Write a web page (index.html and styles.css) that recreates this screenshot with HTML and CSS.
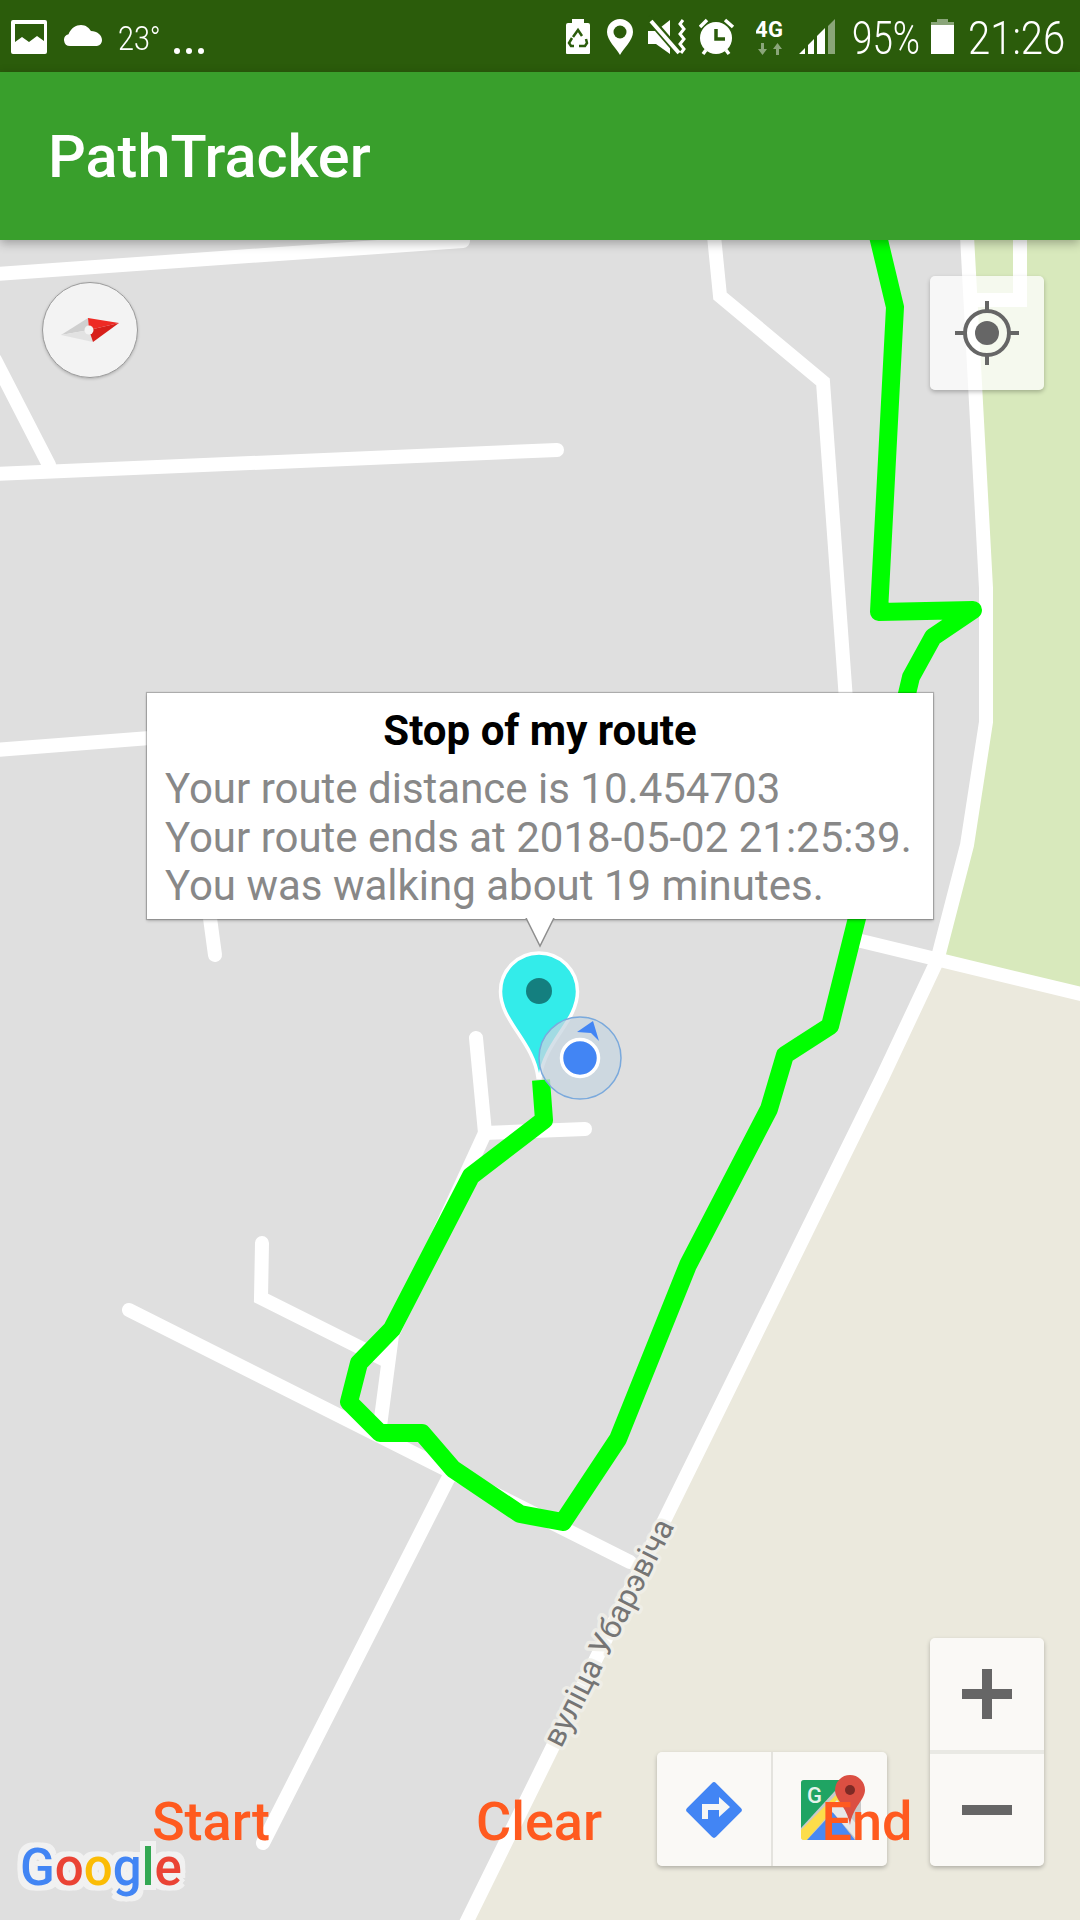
FILE: index.html
```html
<!DOCTYPE html>
<html lang="en">
<head>
<meta charset="utf-8">
<title>PathTracker</title>
<link rel="stylesheet" href="styles.css">
</head>
<body>
<div class="app">
  <header class="statusbar">
    <div class="status-left">
      <svg class="icon w36 ml-11" viewBox="11 0 36 72"><path class="wh" fill-rule="evenodd" d="M13 20h32a2 2 0 0 1 2 2v30a2 2 0 0 1-2 2H13a2 2 0 0 1-2-2V22a2 2 0 0 1 2-2zm2 4v18l7-5 7 5 8-6 7 5V24z"/></svg>
      <svg class="icon w38 ml-17" viewBox="64 0 38 72"><path class="wh" d="M70 46a6 6 0 0 1-1.500-11.800C71 28 76 25 81 25c5 0 8 3 10 6 6 0 11 4 11 9a6 6 0 0 1-5 6z"/></svg>
      <span class="st-text temp ml-16"><span class="squeeze wide">23°</span></span>
      <svg class="icon w30 ml-16" viewBox="174 0 30 72"><circle class="wh" cx="177" cy="51" r="3"/><circle class="wh" cx="189" cy="51" r="3"/><circle class="wh" cx="201" cy="51" r="3"/></svg>
    </div>
    <div class="status-right">
      <svg class="icon w24" viewBox="566 0 24 72"><path class="wh" d="M572 19h12v4h4a2 2 0 0 1 2 2v28a1 1 0 0 1-1 1h-22a1 1 0 0 1-1-1V25a2 2 0 0 1 2-2h4z"/><path class="dk-line" d="M573 37l5-7 4 6M586 39l1 4-2 3h-6M574 46h-3l-2-3 3-5"/></svg>
      <svg class="icon w26 ml-17" viewBox="607 0 26 72"><path class="wh" d="M620 19a13 13 0 0 1 13 13c0 8-9 16-13 23-4-7-13-15-13-23a13 13 0 0 1 13-13z"/><circle class="dk" cx="620" cy="32" r="6.500"/></svg>
      <svg class="icon w38 ml-15" viewBox="648 0 38 72"><path class="wh" d="M648 31h8l14-11v34l-14-10h-8z"/><path class="slash-dk" d="M648 17l32 37"/><path class="slash-wh" d="M651 21l28 32"/><path class="wave" d="M683 20l-3 4 4 5-4 5 4 5-4 5 4 5-3 4"/></svg>
      <svg class="icon w36 ml-13" viewBox="699 0 36 72"><circle class="wh" cx="716" cy="38" r="16"/><path class="ear" d="M700 27l7-7M725 20l8 7M703 54l3-4M729 54l-3-4"/><path class="hand" d="M716 29v10h9"/></svg>
      <svg class="icon w30 ml-21" viewBox="757 0 30 72"><text class="four-g" x="756" y="37">4G</text><path class="dim" d="M762 43h3v6h3l-4.500 6-4.500-6h3zM777 55h3v-6h3l-4.500-6-4.500 6h3z"/></svg>
      <svg class="icon w37 ml-12" viewBox="798 0 37 72"><path class="wh" d="M799 54l6-6v6zM808 54v-9l6-6v15zM817 54V36l8-8v26z"/><path class="dim" d="M828 54V26l7-7v35z"/></svg>
      <span class="st-text pct ml-17"><span class="squeeze">95%</span></span>
      <svg class="icon w23 ml-11" viewBox="931 0 23 72"><path class="dim" d="M937 19h11v3h6v4h-23v-4h6z"/><rect class="wh" x="931" y="25" width="23" height="29"/></svg>
      <span class="st-text clock ml-14"><span class="squeeze wide">21:26</span></span>
    </div>
  </header>

  <div class="appbar"><h1 class="appbar-title">PathTracker</h1></div>

  <main class="map">
    <svg class="map-canvas" viewBox="0 240 1080 1680">
      <rect class="land" x="0" y="240" width="1080" height="1680"/>
      <polygon class="park" points="967,240 1080,240 1080,994 937,961 967,845 986,722 986,588"/>
      <polygon class="sand" points="1080,994 937,961 882,1078 465,1920 1080,1920"/>
      <g class="roads">
        <path d="M-5 274L463 241"/>
        <path d="M-5 474L557 450"/>
        <path d="M-5 360L49 465"/>
        <path d="M-5 750L150 738"/>
        <path d="M210 918L215 955"/>
        <path d="M714 236L720 296L823 382L846 700"/>
        <path d="M967 236L986 588L986 722L967 845L937 961L882 1078L465 1925"/>
        <path d="M1020 236V300H975"/>
        <path d="M857 940L1085 995"/>
        <path d="M476 1038L485 1133L585 1129"/>
        <path d="M485 1133L392 1335L380 1426"/>
        <path d="M262 1243L261 1298L385 1360"/>
        <path d="M129 1310L630 1562"/>
        <path d="M453 1469L263 1843"/>
      </g>
      <path class="track" d="M878 236L895 307L879 612L973 610L933 637L911 677L906 698L857 918L830 1026L785 1055L769 1109L688 1265L618 1439L563 1522L520 1514L453 1469L422 1433L380 1433L349 1402L359 1363L392 1329L471 1176L544 1120L541 1080"/>
      <text class="street" transform="translate(561 1749) rotate(-63)">вуліца Убарэвіча</text>
      <path class="pin" d="M539 953a38.500 38.500 0 0 1 38.500 38.500c0 30-33 50-37.500 86h-2c-4.500-36-37.500-56-37.500-86a38.500 38.500 0 0 1 38.500-38.500z"/>
      <circle class="pin-dot" cx="539" cy="991" r="13"/>
      <circle class="me-halo" cx="580" cy="1058" r="41"/>
      <path class="me-arrow" d="M577 1032L593 1021L599 1041L591 1033z"/>
      <circle class="me-dot" cx="580" cy="1058" r="18.500"/>
    </svg>

    <div class="compass">
      <svg class="compass-needle" viewBox="50 290 80 80">
        <path class="n-g1" d="M61 335L88 318L89 330z"/>
        <path class="n-g2" d="M61 335L89 330L93 342z"/>
        <path class="n-r1" d="M88 318L119 323L89 330z"/>
        <path class="n-r2" d="M89 330L119 323L93 342z"/>
        <circle class="n-c" cx="89" cy="330" r="4.500"/>
      </svg>
    </div>

    <button class="map-btn locate" type="button" aria-label="My location">
      <svg class="btn-icon" viewBox="0 0 68 68"><circle class="loc-ring" cx="34" cy="34" r="22"/><circle class="loc-dot" cx="34" cy="34" r="12"/><path class="loc-tick" d="M34 2v10M34 56v10M2 34h10M56 34h10"/></svg>
    </button>

    <div class="info-window">
      <div class="info-title">Stop of my route</div>
      <div class="info-line">Your route distance is 10.454703</div>
      <div class="info-line">Your route ends at 2018-05-02 21:25:39.</div>
      <div class="info-line">You was walking about 19 minutes.</div>
      <svg class="info-tail" viewBox="0 0 30 30"><path class="tail" d="M1 0L15 28L29 0"/></svg>
    </div>

    <div class="toolbar">
      <div class="tool">
        <svg class="tool-icon" viewBox="0 0 64 64"><rect class="dir-bg" x="11.500" y="12.500" width="41" height="41" rx="3" transform="rotate(45 32 33)"/><path class="dir-arrow" d="M20 42V27H37V20L48 30L37 40V33H26V42z"/></svg>
      </div>
      <div class="tool">
        <svg class="tool-icon maps" viewBox="0 0 64 70">
          <rect class="m-grey" x="2" y="10" width="60" height="60" rx="3"/>
          <path class="m-green" d="M5 10H46L2 58V13a3 3 0 0 1 3-3z"/>
          <path class="m-yellow" d="M2 60L38 24L43 29L8 70H5a3 3 0 0 1-3-3z"/>
          <path class="m-blue" d="M8 70L34 42L56 70z"/>
          <path class="m-white" d="M30 38L38 30L62 60V70H58z"/>
          <text class="m-g" x="8" y="33">G</text>
          <path class="m-pin" d="M51 5a15 15 0 0 1 15 15c0 10-12 16-15 35-3-19-15-25-15-35a15 15 0 0 1 15-15z"/>
          <circle class="m-pin-dot" cx="51" cy="20" r="5"/>
        </svg>
      </div>
    </div>

    <div class="zoom-ctl">
      <div class="zoom-cell"><svg class="zoom-icon" viewBox="0 0 50 50"><path d="M20 0h10v20h20v10H30v20H20V30H0V20h20z"/></svg></div>
      <div class="zoom-cell"><svg class="zoom-icon" viewBox="0 0 50 50"><path d="M0 20h50v10H0z"/></svg></div>
    </div>

    <div class="google"><span class="g-b">G</span><span class="g-r">o</span><span class="g-y">o</span><span class="g-b">g</span><span class="g-g">l</span><span class="g-r">e</span></div>

    <div class="actions">
      <button class="action" type="button">Start</button>
      <button class="action" type="button">Clear</button>
      <button class="action" type="button">End</button>
    </div>
  </main>
</div>
</body>
</html>
```

FILE: styles.css
```css
* { box-sizing: border-box; }
html, body { margin: 0; padding: 0; }
body { font-family: Roboto, "Liberation Sans", sans-serif; background: #dfdfdf; }
.app { width: 1080px; height: 1920px; display: flex; flex-direction: column; overflow: hidden; }

/* status bar */
.statusbar { height: 72px; background: #2b5c0b; display: flex; justify-content: space-between; color: #fff; flex: none; }
.status-left, .status-right { display: flex; }
.icon { height: 72px; display: block; flex: none; }
.w23 { width: 23px; } .w24 { width: 24px; } .w26 { width: 26px; } .w30 { width: 30px; }
.w36 { width: 36px; } .w37 { width: 37px; } .w38 { width: 38px; }
.ml-11 { margin-left: 11px; } .ml-12 { margin-left: 12px; } .ml-13 { margin-left: 13px; }
.ml-14 { margin-left: 14px; } .ml-15 { margin-left: 15px; } .ml-16 { margin-left: 16px; }
.ml-17 { margin-left: 17px; } .ml-21 { margin-left: 21px; }
.wh { fill: #fff; }
.dk { fill: #2b5c0b; }
.dim { fill: #fff; opacity: .45; }
.dk-line { fill: none; stroke: #2b5c0b; stroke-width: 2.500; }
.slash-dk { stroke: #2b5c0b; stroke-width: 8; fill: none; }
.slash-wh { stroke: #fff; stroke-width: 4; fill: none; }
.wave { stroke: #fff; stroke-width: 3; fill: none; }
.ear { stroke: #fff; stroke-width: 3.500; fill: none; }
.hand { stroke: #2b5c0b; stroke-width: 3.500; fill: none; }
.four-g { font: 700 22px Roboto, sans-serif; fill: #fff; letter-spacing: .5px; }
.st-text { display: block; height: 72px; padding-top: 5px; line-height: 67px; font-weight: 300; white-space: nowrap; flex: none; }
.squeeze { display: inline-block; transform: scaleX(.8); transform-origin: 0 50%; }
.squeeze.wide { transform: scaleX(.87); }
.temp { font-size: 33px; width: 40px; }
.pct { font-size: 46px; width: 68px; }
.clock { font-size: 46px; width: 112px; }

/* app bar */
.appbar { height: 168px; flex: none; background: #399f2c; display: flex; align-items: center; padding: 3px 0 0 48px; position: relative; z-index: 5; box-shadow: 0 3px 10px rgba(0,0,0,.3); }
.appbar-title { margin: 0; color: #fff; font-size: 59.400px; font-weight: 500; line-height: 1; }

/* map */
.map { flex: 1; position: relative; overflow: hidden; }
.map-canvas { position: absolute; left: 0; top: 0; width: 1080px; height: 1680px; display: block; }
.land { fill: #dfdfdf; }
.park { fill: #d8e9bc; }
.sand { fill: #ebe9dd; }
.roads path { fill: none; stroke: #fff; stroke-width: 14; stroke-linecap: round; stroke-linejoin: miter; }
.track { fill: none; stroke: #00ff00; stroke-width: 18; stroke-linejoin: round; }
.street { font: 400 31.500px Roboto, sans-serif; fill: #757575; stroke: #f0efe9; stroke-width: 7px; stroke-opacity: .85; paint-order: stroke fill; stroke-linejoin: round; }
.pin { fill: #33ecea; stroke: #fff; stroke-width: 3.500; }
.pin-dot { fill: #147f7f; }
.me-halo { fill: rgba(199,213,224,.75); stroke: #7aa9dc; stroke-width: 1.500; }
.me-arrow { fill: #4285f4; }
.me-dot { fill: #4285f4; stroke: #fff; stroke-width: 3.500; }

/* compass */
.compass { position: absolute; left: 42px; top: 42px; width: 96px; height: 96px; border-radius: 50%; background: #f3f3f3; border: 1.500px solid #9b9b9b; box-shadow: 0 1px 3px rgba(0,0,0,.2); display: flex; align-items: center; justify-content: center; }
.compass-needle { width: 80px; height: 80px; display: block; flex: none; }
.n-g1 { fill: #cfcfcf; } .n-g2 { fill: #e2e2e2; } .n-r1 { fill: #ee2a24; } .n-r2 { fill: #d71f1a; } .n-c { fill: #f3f3f3; }

/* map buttons */
.map-btn, .toolbar, .zoom-ctl { background: rgba(255,255,255,.74); border-radius: 5px; box-shadow: 0 2px 4px rgba(0,0,0,.25); }
.locate { position: absolute; left: 930px; top: 36px; width: 114px; height: 114px; padding: 0; border: 0; display: flex; align-items: center; justify-content: center; }
.btn-icon { width: 68px; height: 68px; display: block; }
.loc-ring { fill: none; stroke: #666; stroke-width: 4; }
.loc-dot { fill: #666; }
.loc-tick { fill: none; stroke: #666; stroke-width: 4; }

/* info window */
.info-window { position: absolute; left: 147px; top: 453px; width: 786px; height: 226px; background: #fff; box-shadow: 0 0 1px 1px rgba(0,0,0,.22), 0 2px 3px rgba(0,0,0,.2); padding: 3px 0 0 18px; color: #888; z-index: 3; }
.info-title { color: #000; font-weight: 700; font-size: 42px; line-height: 69.400px; text-align: center; margin: 0 0 0 -18px; }
.info-line { font-size: 42px; line-height: 48.500px; white-space: nowrap; }
.info-tail { position: absolute; left: 378px; top: 225px; width: 30px; height: 30px; display: block; }
.tail { fill: #fff; stroke: #8f8f8f; stroke-width: 1.500; }

/* toolbar and zoom */
.toolbar { position: absolute; left: 657px; top: 1512px; width: 230px; height: 114px; display: flex; }
.tool { flex: 1; display: flex; align-items: center; justify-content: center; }
.tool + .tool { border-left: 2px solid #e4e3de; }
.tool-icon { width: 64px; height: 64px; display: block; }
.tool-icon.maps { height: 70px; overflow: visible; margin: -8px 0 0 1px; }
.dir-bg { fill: #4285f4; }
.dir-arrow { fill: #f6f6f4; }
.m-grey { fill: #c9c9c9; } .m-green { fill: #1fa463; } .m-yellow { fill: #fddd4a; }
.m-blue { fill: #4a89f3; } .m-white { fill: #e8e8e8; }
.m-g { font: 500 22px Roboto, sans-serif; fill: #e6f3ec; }
.m-pin { fill: #db4f42; } .m-pin-dot { fill: #7d2a25; }

.zoom-ctl { position: absolute; left: 930px; top: 1398px; width: 114px; height: 228px; display: flex; flex-direction: column; }
.zoom-cell { flex: 1; display: flex; align-items: center; justify-content: center; }
.zoom-cell + .zoom-cell { border-top: 4px solid #e9e9e4; }
.zoom-icon { width: 50px; height: 50px; display: block; fill: #666; }

/* google logo */
.google { position: absolute; left: 20px; top: 1596px; font-size: 51px; line-height: 64px; font-weight: 500; filter: drop-shadow(5px 0 0 #f1f1f1) drop-shadow(-5px 0 0 #f1f1f1) drop-shadow(0 5px 0 #f1f1f1) drop-shadow(0 -5px 0 #f1f1f1); }
.g-b { color: #4285f4; } .g-r { color: #ea4335; } .g-y { color: #fbbc05; } .g-g { color: #34a853; }

/* bottom actions */
.actions { position: absolute; left: 47px; right: 49px; bottom: 66px; display: flex; z-index: 4; }
.action { flex: 1; padding: 0; border: 0; background: none; color: #ff5a1f; font: 500 54px/64px Roboto, sans-serif; text-align: center; }
```
